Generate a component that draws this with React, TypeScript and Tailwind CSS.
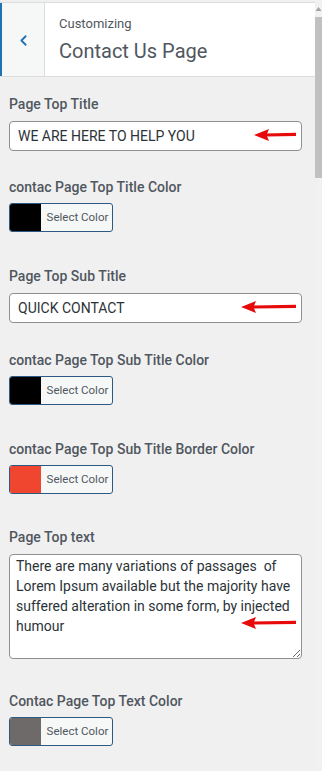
import { ChevronLeft } from "lucide-react";

type Field =
  | { kind: "text"; label: string; value: string; arrowX: number; arrowW: number; mb: string }
  | { kind: "color"; label: string; color: string; mb: string }
  | { kind: "area"; label: string; value: string; mb: string };

const fields: Field[] = [
  { kind: "text", label: "Page Top Title", value: "WE ARE HERE TO HELP YOU", arrowX: 245, arrowW: 42, mb: "mb-[26px]" },
  { kind: "color", label: "contac Page Top Title Color", color: "#000000", mb: "mb-[34px]" },
  { kind: "text", label: "Page Top Sub Title", value: "QUICK CONTACT", arrowX: 232, arrowW: 55, mb: "mb-[27px]" },
  { kind: "color", label: "contac Page Top Sub Title Color", color: "#000000", mb: "mb-[34px]" },
  { kind: "color", label: "contac Page Top Sub Title Border Color", color: "#f04630", mb: "mb-[33px]" },
  {
    kind: "area",
    label: "Page Top text",
    value:
      "There are many variations of passages  of Lorem Ipsum available but the majority have suffered alteration in some form, by injected humour",
    mb: "mb-[32px]",
  },
  { kind: "color", label: "Contac Page Top Text Color", color: "#6d6a69", mb: "mb-[20px]" },
];

function RedArrow({ width = 42 }: { width?: number }) {
  return (
    <svg width={width} height="12" viewBox={`0 0 ${width} 12`}>
      <path d={`M12 6 L${width} 5.3`} stroke="#e60a0a" strokeWidth="3.2" fill="none" />
      <path d="M0 6 L15 0 L12.5 6 L15 12 Z" fill="#e60a0a" />
    </svg>
  );
}

function ColorButton({ color }: { color: string }) {
  return (
    <div className="flex h-[29px] w-[104px] overflow-hidden rounded-[3px] border border-[#2c5a80] bg-[#f6f7f7]">
      <div className="w-[31px] shrink-0" style={{ backgroundColor: color }} />
      <div className="flex flex-1 items-center justify-center pl-[2px] text-[11.5px] text-[#50575e]">Select Color</div>
    </div>
  );
}

export default function App() {
  return (
    <div className="flex h-[771px] w-[322px] overflow-hidden bg-[#f0f0f1] font-['Roboto',sans-serif]">
      <div className="flex min-w-0 flex-1 flex-col">
        {/* header */}
        <div className="mt-[2px] flex h-[75px] border-y border-[#dcdcde] bg-white">
          <div className="flex w-[45px] shrink-0 items-center justify-center border-r border-l-2 border-r-[#dcdcde] border-l-[#2271b1] bg-[#f6f7f7]">
            <ChevronLeft className="mt-[2px] h-[17px] w-[17px] text-[#2271b1]" strokeWidth={2.6} />
          </div>
          <div className="flex flex-col justify-center pl-[14px]">
            <div className="text-[13px] leading-[18px] text-[#50575e]">Customizing</div>
            <div className="mt-[5px] text-[20px] leading-[26px] text-[#50575e]">Contact Us Page</div>
          </div>
        </div>

        {/* controls */}
        <div className="pl-[9px] pr-[13px] pt-[17px]">
          {fields.map((f, i) => (
            <div key={i} className={f.mb}>
              <div
                className={
                  f.kind === "color"
                    ? "mb-[6px] text-[14px] font-medium leading-[20px] text-[#50575e]"
                    : "mb-[7px] text-[14px] font-medium leading-[20px] text-[#50575e]"
                }
              >
                {f.label}
              </div>
              {f.kind === "text" && (
                <div className="relative">
                  <input
                    readOnly
                    value={f.value}
                    className="h-[30px] w-full rounded-[4px] border border-[#8c8f94] bg-white px-[8px] text-[14px] text-[#2c3338] outline-none"
                  />
                  <div className="absolute top-[8px]" style={{ left: f.arrowX }}>
                    <RedArrow width={f.arrowW} />
                  </div>
                </div>
              )}
              {f.kind === "color" && <ColorButton color={f.color} />}
              {f.kind === "area" && (
                <div className="relative">
                  <textarea
                    readOnly
                    defaultValue={f.value}
                    className="block h-[105px] w-full rounded-[4px] border border-[#8c8f94] bg-white px-[6px] py-[1px] text-[14px] leading-[20px] text-[#2c3338] outline-none"
                  />
                  <div className="absolute left-[232px] top-[63px]">
                    <RedArrow width={55} />
                  </div>
                </div>
              )}
            </div>
          ))}
        </div>
      </div>

      {/* scrollbar */}
      <div className="flex w-[7px] shrink-0 flex-col bg-[#f1f1f1]">
        <div className="flex h-[16px] items-center justify-center pt-[2px]">
          <svg width="7" height="6" viewBox="0 0 7 6">
            <path d="M3.5 1 L6.5 5 L0.5 5 Z" fill="#a3a3a3" />
          </svg>
        </div>
        <div className="mt-[1px] h-[161px] bg-[#c1c1c1]" />
      </div>
    </div>
  );
}
